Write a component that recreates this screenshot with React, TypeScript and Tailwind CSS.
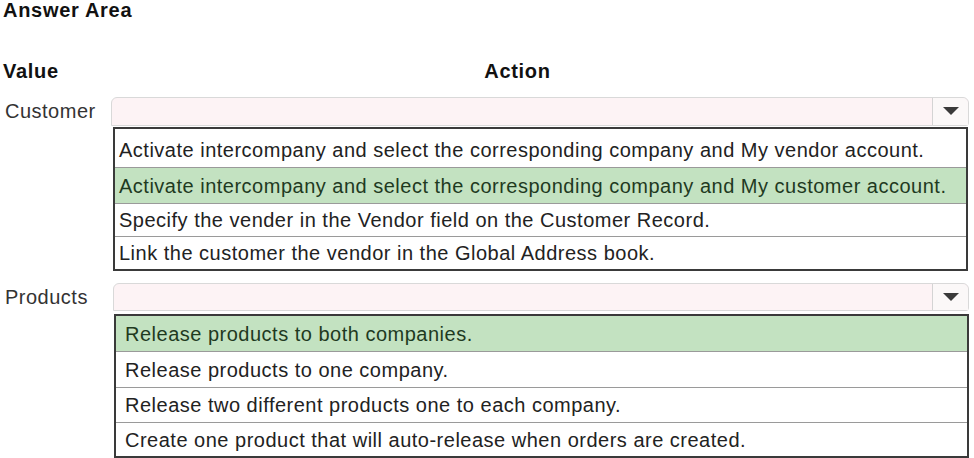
import React from "react";

const Arrow = () => (
  <svg width="16" height="8" viewBox="0 0 16 8">
    <path d="M0 0 L16 0 L8 8 Z" fill="#3a3a3a" />
  </svg>
);

function Dropdown({ className }: { className: string }) {
  return (
    <div className={`flex border border-[#d9d9d9] rounded-t-[6px] rounded-br-[3px] bg-[#fdf3f5] ${className}`}>
      <div className="flex-1" />
      <div className="w-[36px] border-l border-[#d4d4d4] flex items-center justify-center bg-[#fbf8f8] rounded-tr-[6px]">
        <Arrow />
      </div>
    </div>
  );
}

function List({ items, green, className, pad }: { items: { t: string; h: string }[]; green: number; className: string; pad: string }) {
  return (
    <div className={`border-2 border-[#3a3a3a] bg-white ${className}`}>
      {items.map((it, i) => (
        <div
          key={i}
          className={`flex items-center ${pad} ${it.h} ${i > 0 ? "border-t border-[#9a9a9a]" : ""} ${i === green ? "bg-[#c3e2c1] text-[#1f3a1f]" : "text-[#222]"}`}
        >
          {it.t}
        </div>
      ))}
    </div>
  );
}

export default function App() {
  return (
    <div className="w-[974px] h-[458px] bg-white text-[#222] relative overflow-hidden" style={{ fontFamily: '"Liberation Sans", Arial, sans-serif' }}>
      <div className="pl-[3px] pt-[0px] text-[20px] tracking-[0.7px] font-bold leading-[20px] text-[#111]">Answer Area</div>
      <div className="flex mt-[40px] h-[21px] items-center text-[20px] tracking-[0.7px] font-bold text-[#111]">
        <div className="pl-[3px] w-[111px]">Value</div>
        <div className="flex-1 text-center pr-[50px]">Action</div>
      </div>
      <div className="flex mt-[15px] items-center">
        <div className="w-[111px] pl-[5px] text-[20px] tracking-[0.5px] text-[#333]">Customer</div>
        <Dropdown className="w-[858px] h-[29px]" />
      </div>
      <List
        className="ml-[113px] mt-[1px] w-[855px] text-[20px] tracking-[0.5px]"
        pad="pl-[4px]"
        green={1}
        items={[
          { t: "Activate intercompany and select the corresponding company and My vendor account.", h: "h-[38px] pt-[4px]" },
          { t: "Activate intercompany and select the corresponding company and My customer account.", h: "h-[36px]" },
          { t: "Specify the vender in the Vendor field on the Customer Record.", h: "h-[33px]" },
          { t: "Link the customer the vendor in the Global Address book.", h: "h-[33px]" },
        ]}
      />
      <div className="flex mt-[11px] items-center">
        <div className="w-[113px] pl-[5px] text-[20px] tracking-[0.5px] text-[#333]">Products</div>
        <Dropdown className="w-[856px] h-[28px]" />
      </div>
      <List
        className="ml-[114px] mt-[2px] w-[855px] text-[20px] tracking-[0.5px]"
        pad="pl-[9px]"
        green={0}
        items={[
          { t: "Release products to both companies.", h: "h-[35px]" },
          { t: "Release products to one company.", h: "h-[36px]" },
          { t: "Release two different products one to each company.", h: "h-[35px]" },
          { t: "Create one product that will auto-release when orders are created.", h: "h-[34px]" },
        ]}
      />
    </div>
  );
}
